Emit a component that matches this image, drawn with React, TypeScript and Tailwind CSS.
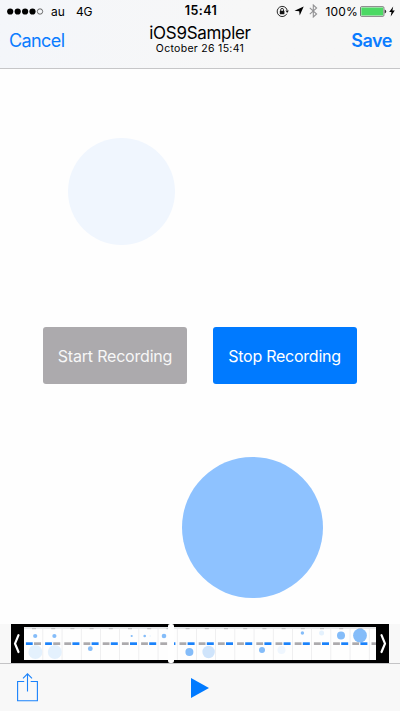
import React from "react";

type Dot = { x: number; y: number; r: number; fill: string };
type Frame = { recording?: boolean; dots: Dot[] };

const MID = "#84bcf9";
const SOFT = "#cfe4fb";
const PALE = "#e4f1fd";
const FAINT = "#eff6fe";

const FRAME_WIDTH = 19.2;

const frames: Frame[] = [
  { recording: true, dots: [{ x: 11.2, y: 9, r: 2.1, fill: MID }, { x: 11.4, y: 25, r: 7, fill: PALE }] },
  { recording: true, dots: [{ x: 11.2, y: 9, r: 2.1, fill: MID }, { x: 11.6, y: 25, r: 7, fill: PALE }] },
  { dots: [] },
  { dots: [{ x: 8.7, y: 21.7, r: 2.4, fill: MID }] },
  { dots: [] },
  { dots: [{ x: 11.7, y: 9, r: 1.1, fill: MID }] },
  { dots: [{ x: 5.5, y: 9, r: 1.3, fill: MID }, { x: 11, y: 9, r: 0.7, fill: PALE }] },
  { dots: [{ x: 5.6, y: 9, r: 2.3, fill: MID }] },
  { dots: [{ x: 11.8, y: 25, r: 4, fill: MID }] },
  { dots: [{ x: 11.8, y: 25, r: 6.2, fill: SOFT }] },
  { dots: [] },
  { dots: [] },
  { dots: [{ x: 7.6, y: 23, r: 3, fill: MID }] },
  { dots: [{ x: 7.9, y: 23, r: 4, fill: FAINT }] },
  { dots: [{ x: 9.6, y: 6, r: 1.7, fill: MID }] },
  { dots: [{ x: 9.6, y: 6, r: 2.5, fill: PALE }] },
  { dots: [{ x: 9.8, y: 8.5, r: 4, fill: MID }] },
  { dots: [{ x: 9.6, y: 8.5, r: 6.9, fill: MID }] },
  { dots: [] },
];

function Filmstrip() {
  return (
    <svg className="h-[33px] w-[352px] shrink-0" viewBox="0 0 352 33">
      <rect width="352" height="33" fill="#fefefe" />
      <rect width="352" height="2" fill="#e6e8ea" />
      {frames.map((frame, i) => (
        <g key={i} transform={`translate(${i * FRAME_WIDTH} 0)`}>
          <rect x="18.5" y="0" width="0.7" height="33" fill="#e8e8ea" />
          <rect x="8" y="1" width="4" height="1.2" fill="#c2c2c4" />
          {frame.dots.map((d, j) => (
            <circle key={j} cx={d.x} cy={d.y} r={d.r} fill={d.fill} />
          ))}
          <rect x="1.9" y="15.3" width="6.8" height="2.7" fill={frame.recording ? "#1a82fb" : "#acaaad"} />
          <rect x="10" y="15.3" width="7" height="2.7" fill={frame.recording ? "#acaaad" : "#1a82fb"} />
        </g>
      ))}
    </svg>
  );
}

function StatusBar() {
  return (
    <div className="flex h-[22px] items-center pl-[7px] pr-[5px] text-[12px] leading-none">
      <div className="flex w-[145px] items-center">
        <svg className="h-[7px] w-[37px]" viewBox="0 0 37 7">
          {[3.2, 10.7, 18.1, 25.5].map((x) => (
            <circle key={x} cx={x} cy="3.5" r="3.1" fill="#000" />
          ))}
          <circle cx="33" cy="3.5" r="2.7" fill="none" stroke="#333" strokeWidth=".7" />
        </svg>
        <span className="ml-[7px] w-[25px] pt-px tracking-[-0.1px]">au</span>
        <span className="pt-px tracking-[-0.2px]">4G</span>
      </div>
      <div className="w-[98px] pt-px text-center text-[12.5px] font-semibold tracking-[0.4px]">15:41</div>
      <div className="flex flex-1 items-center justify-end">
        <svg className="h-[13px] w-[13px] shrink-0" viewBox="0 0 13 13" fill="none" stroke="#111">
          <path d="M10.8 8.8A5.1 5.1 0 1 1 11.2 5.2" strokeWidth=".9" />
          <path d="M9.5 5.6h3.3l-1.6 2.3z" fill="#111" stroke="none" />
          <rect x="3.8" y="5.7" width="4.6" height="3.5" rx=".4" fill="#111" stroke="none" />
          <path d="M4.7 6V4.8a1.4 1.4 0 0 1 2.8 0V6" strokeWidth=".9" />
        </svg>
        <svg className="ml-[5px] h-[10px] w-[10px] shrink-0" viewBox="0 0 10 10">
          <path d="M9.7.4 5.7 9.5 5.2 5.2.5 4.8z" fill="#000" />
        </svg>
        <svg className="ml-[5px] h-[14px] w-[9px] shrink-0" viewBox="0 0 9 14" fill="none" stroke="#929294" strokeWidth="1.1">
          <path d="M.8 3.9 7.6 10 4.3 13V1l3.3 3L.8 10.1" />
        </svg>
        <span className="ml-[7px] whitespace-nowrap pt-px text-[12px] tracking-[0.2px]">100%</span>
        <svg className="ml-[2px] h-[11px] w-[27px] shrink-0" viewBox="0 0 27 11">
          <rect x=".5" y=".7" width="23.4" height="9.6" rx="1" fill="#fff" stroke="#555" strokeWidth=".8" />
          <rect x="1.3" y="1.5" width="21.8" height="8" fill="#4cd964" />
          <path d="M24.7 3.5q1.5.4 1.5 2t-1.5 2z" fill="#333" />
        </svg>
        <svg className="ml-[2px] h-[11px] w-[6px] shrink-0" viewBox="0 0 6 11">
          <path d="M4.2.6.2 6h2.3l-.8 4.4L5.8 4.6H3.4z" fill="#000" />
        </svg>
      </div>
    </div>
  );
}

export default function App() {
  return (
    <div className="flex h-[711px] w-[400px] flex-col overflow-hidden bg-[#fefefe] font-['Inter','Liberation_Sans',sans-serif] text-black">
      <header className="h-[69px] shrink-0 border-b border-[#c6c6c8] bg-gradient-to-r from-[#f4f6fa] to-[#f7f7f7] to-60%">
        <StatusBar />
        <div className="flex h-[38px] items-center justify-between pl-[9px] pr-[8px]">
          <button className="w-[80px] text-left text-[18px] leading-6 tracking-[-0.6px] text-[#0a7cff]">Cancel</button>
          <div className="flex flex-col items-center pb-[4px] pr-[1px]">
            <h1 className="text-[17px] leading-[20px] tracking-[-0.3px]">iOS9Sampler</h1>
            <p className="text-[10.5px] leading-[12px] tracking-[0.3px]">October 26 15:41</p>
          </div>
          <button className="w-[80px] text-right text-[18px] font-semibold leading-6 tracking-[-0.5px] text-[#0a7cff]">Save</button>
        </div>
      </header>

      <main className="flex h-[555px] shrink-0 flex-col">
        <div className="ml-[68px] mt-[69px] size-[107px] shrink-0 rounded-full bg-[#f0f6fe]" />
        <div className="mt-[82px] flex shrink-0 gap-[25.5px] pl-[43px]">
          <button className="h-[57px] w-[144px] rounded-[3px] bg-[#acaaad] text-[16px] tracking-[-0.2px] text-[#f7f7f7]">Start Recording</button>
          <button className="h-[57px] w-[144px] rounded-[3px] bg-[#007aff] text-[16px] tracking-[-0.25px] text-white">Stop Recording</button>
        </div>
        <div className="ml-[182px] mt-[73px] size-[141px] shrink-0 rounded-full bg-[#8ec2ff]" />
      </main>

      <footer className="flex h-[87px] shrink-0 flex-col bg-[#f8f8f8]">
        <div className="h-[40px] border-b border-[#c4c4c6] px-[11px]">
          <div className="relative flex h-[39px] items-center bg-black">
            <svg className="h-[39px] w-[13px] shrink-0" viewBox="0 0 13 39" fill="none" stroke="#fff" strokeWidth="2.2" strokeLinecap="round" strokeLinejoin="round">
              <path d="M7.5 11.2 4 19.6l3.5 8.4" />
            </svg>
            <Filmstrip />
            <svg className="h-[39px] w-[13px] shrink-0" viewBox="0 0 13 39" fill="none" stroke="#fff" strokeWidth="2.2" strokeLinecap="round" strokeLinejoin="round">
              <path d="M5.5 11.2 9 19.6 5.5 28" />
            </svg>
            <div className="absolute left-[157px] top-0 h-[39px] w-[6px] rounded-[2px] bg-white" />
          </div>
        </div>
        <div className="flex h-[47px] items-center pl-[17px]">
          <svg className="h-[29px] w-[21px]" viewBox="0 0 21 29" fill="none" stroke="#1a82fb" strokeWidth="1.1">
            <path d="M7.2 8.5H.6v19.2h19.8V8.5h-6.7M10.5 18.5V.9M6 5.4 10.5.9 15 5.4" />
          </svg>
          <svg className="ml-[153px] h-[20px] w-[18px]" viewBox="0 0 18 20">
            <path d="M0 0 18 10 0 20z" fill="#007aff" />
          </svg>
        </div>
      </footer>
    </div>
  );
}
